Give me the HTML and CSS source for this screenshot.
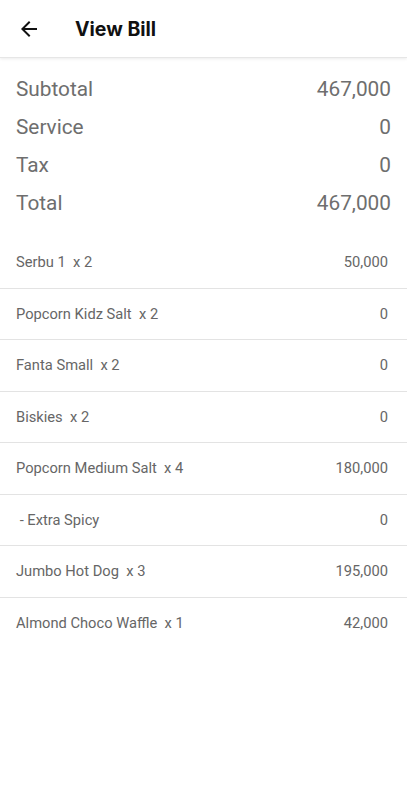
FILE: index.html
```html
<!DOCTYPE html>
<html>
<head>
<meta charset="utf-8">
<link rel="stylesheet" href="styles.css">
</head>
<body>
<header class="appbar">
  <svg class="back" width="24" height="24" viewBox="0 0 24 24"><path d="M20 11H7.83l5.59-5.59L12 4l-8 8 8 8 1.41-1.41L7.83 13H20v-2z" fill="#111"/></svg>
  <h1 class="title">View Bill</h1>
</header>
<section class="summary">
  <div class="srow"><span>Subtotal</span><span>467,000</span></div>
  <div class="srow"><span>Service</span><span>0</span></div>
  <div class="srow"><span>Tax</span><span>0</span></div>
  <div class="srow"><span>Total</span><span>467,000</span></div>
</section>
<ul class="items">
  <li class="item"><span>Serbu 1&nbsp; x 2</span><span>50,000</span></li>
  <li class="item"><span>Popcorn Kidz Salt&nbsp; x 2</span><span>0</span></li>
  <li class="item"><span>Fanta Small&nbsp; x 2</span><span>0</span></li>
  <li class="item"><span>Biskies&nbsp; x 2</span><span>0</span></li>
  <li class="item"><span>Popcorn Medium Salt&nbsp; x 4</span><span>180,000</span></li>
  <li class="item"><span>&nbsp;- Extra Spicy</span><span>0</span></li>
  <li class="item"><span>Jumbo Hot Dog&nbsp; x 3</span><span>195,000</span></li>
  <li class="item"><span>Almond Choco Waffle&nbsp; x 1</span><span>42,000</span></li>
</ul>
</body>
</html>
```
FILE: styles.css
```css
* { box-sizing: border-box; }
body {
  margin: 0;
  font-family: Roboto, "Noto Sans", sans-serif;
  background: #fff;
}
.appbar {
  height: 58px;
  display: flex;
  align-items: center;
  padding-left: 17px;
  gap: 34px;
  border-bottom: 1px solid #e6e6e6;
  box-shadow: 0 1px 3px rgba(0,0,0,0.08);
}
.back { display: block; }
.title {
  margin: 0;
  font-family: Inter, Roboto, sans-serif;
  font-size: 19.5px;
  font-weight: 700;
  color: #111;
}
.summary {
  padding: 12px 16px 0 16px;
}
.srow {
  height: 38px;
  display: flex;
  justify-content: space-between;
  align-items: center;
  font-size: 20.8px;
  color: #6e6e6e;
}
.items {
  list-style: none;
  margin: 0;
  padding: 0;
  margin-top: 15px;
}
.item {
  height: 51.5px;
  display: flex;
  justify-content: space-between;
  align-items: center;
  padding: 0 19px 0 16px;
  font-size: 14.7px;
  color: #666;
  border-bottom: 1px solid #e3e3e3;
}
.item:last-child { border-bottom: none; }
```
